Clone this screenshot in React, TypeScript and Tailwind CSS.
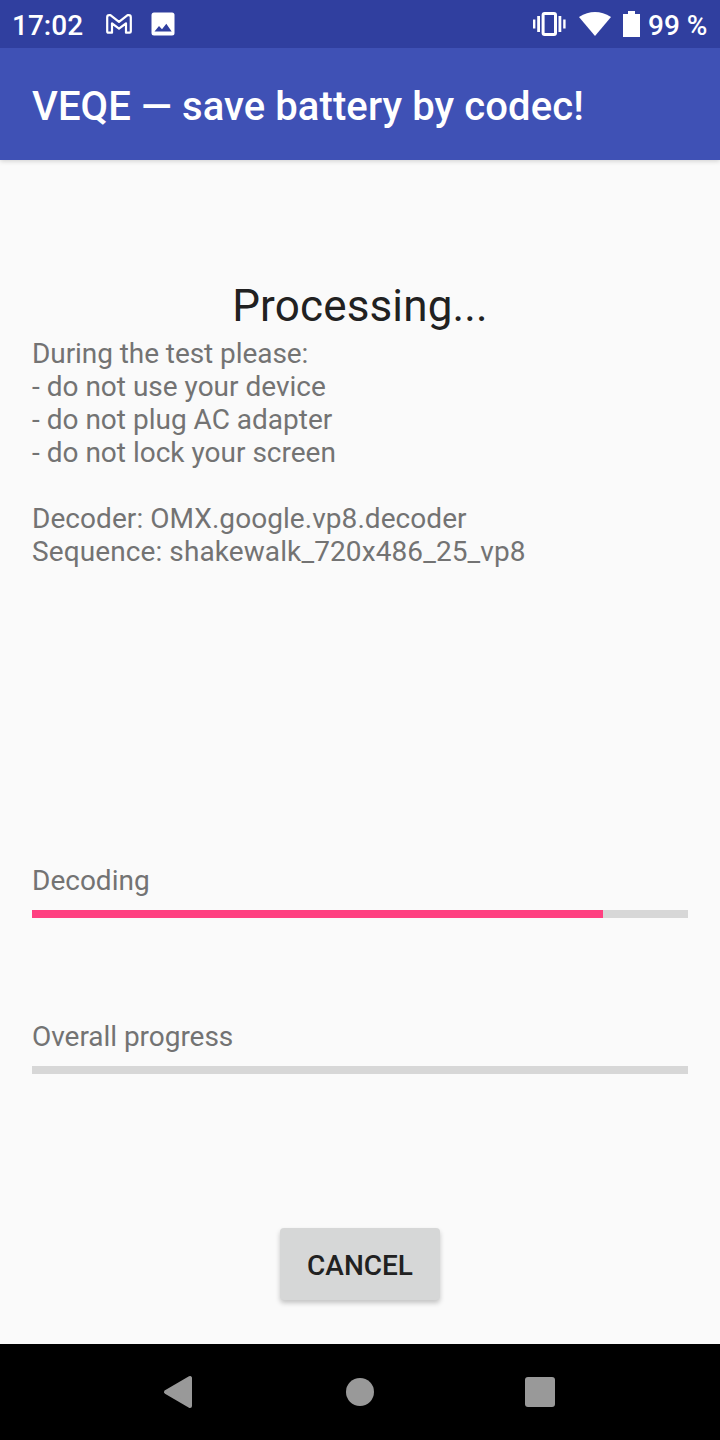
export default function App() {
  return (
    <div className="flex h-[1440px] w-[720px] flex-col overflow-hidden bg-[#fafafa] font-['Roboto',sans-serif] text-[28px] leading-[33px] text-[#737373]">
      <div className="z-10 flex h-12 shrink-0 items-center bg-[#303f9f] pl-3 pr-3 font-medium text-white">
        <span className="w-[71px] pt-[3px]">17:02</span>
        <svg className="ml-[23px]" width="26" height="20" viewBox="0 0 26 20" fill="none" stroke="#fff" strokeWidth="2.200" strokeLinejoin="round"><path d="M1.200 3.200Q1.200 1.200 3.200 1.200H4.400L13 7.900 21.600 1.200H22.800Q24.800 1.200 24.800 3.200V17.500Q24.800 18.700 23.600 18.700H20V9.300L13 14.700 6 9.300V18.700H2.400Q1.200 18.700 1.200 17.500Z" /></svg>
        <svg className="ml-[19px]" width="24" height="24" viewBox="0 0 24 24"><rect x=".5" y=".5" width="23" height="23" rx="2.500" fill="#fff" /><path d="M3.500 19.500 8 14 11 17.200 15.300 11.800 20.700 19.500Z" fill="#303f9f" /></svg>
        <svg className="ml-auto" width="33" height="32" viewBox="0 0 33 32" fill="#fff"><path d="M0 11.500h2.400v9H0zM4.200 8h2.800v16H4.200zM25.500 8h2.800v16h-2.800zM30.200 11.500h2.400v9h-2.400z" /><rect x="10.100" y="5.500" width="12.400" height="21" rx="1.500" fill="none" stroke="#fff" strokeWidth="3" /></svg>
        <svg className="ml-[13px]" width="32" height="24" viewBox="0 0 32 24" fill="#fff"><path d="M0 5Q16-5 32 5L16 24Z" /></svg>
        <svg className="ml-3" width="17" height="26" viewBox="0 0 17 26" fill="#fff"><path d="M5 0h7v3h5v23H0V3h5Z" /></svg>
        <span className="ml-2 w-[60px] whitespace-nowrap pt-[3px]">99 %</span>
      </div>
      <header className="flex h-28 shrink-0 items-center bg-[#3f51b5] px-8 pt-[6px] text-[40px] font-medium leading-[48px] tracking-[0.1px] text-white shadow-[0_1px_5px_rgba(0,0,0,0.18)]">VEQE — save battery by codec!</header>
      <main className="flex h-[1184px] shrink-0 flex-col px-8 pt-[120px]">
        <h1 className="text-center text-[44px] leading-[52px] tracking-[0.16px] text-[#212121]">Processing...</h1>
        <div className="mt-[5px]">
          <p className="tracking-[-0.07px]">During the test please:</p>
          <p>- do not use your device</p>
          <p>- do not plug AC adapter</p>
          <p>- do not lock your screen</p>
          <p className="mt-[33px] tracking-[0.06px]">Decoder: OMX.google.vp8.decoder</p>
          <p className="tracking-[0.1px]">Sequence: shakewalk_720x486_25_vp8</p>
        </div>
        <div className="mt-[296px]">Decoding</div>
        <div className="mt-[13px] h-2 bg-[#d7d7d7]"><div className="h-2 w-[571px] bg-[#ff4081]" /></div>
        <div className="mt-[102px] tracking-[-0.04px]">Overall progress</div>
        <div className="mt-[13px] h-2 bg-[#d7d7d7]" />
        <button className="mt-[154px] h-[72px] w-40 self-center rounded-[4px] bg-[#d6d7d7] pt-[2px] font-medium text-[#212121] shadow-[0_3px_5px_rgba(0,0,0,0.22)]">CANCEL</button>
      </main>
      <nav className="flex h-24 items-center bg-black pl-[163px]">
        <svg width="31" height="34" viewBox="0 0 31 34" fill="#999"><path d="M3 17 27 3V31Z" stroke="#999" strokeWidth="4" strokeLinejoin="round" /></svg>
        <div className="ml-[152px] size-7 rounded-full bg-[#999]" />
        <div className="ml-[151px] size-[30px] rounded-[3px] bg-[#999]" />
      </nav>
    </div>
  );
}
